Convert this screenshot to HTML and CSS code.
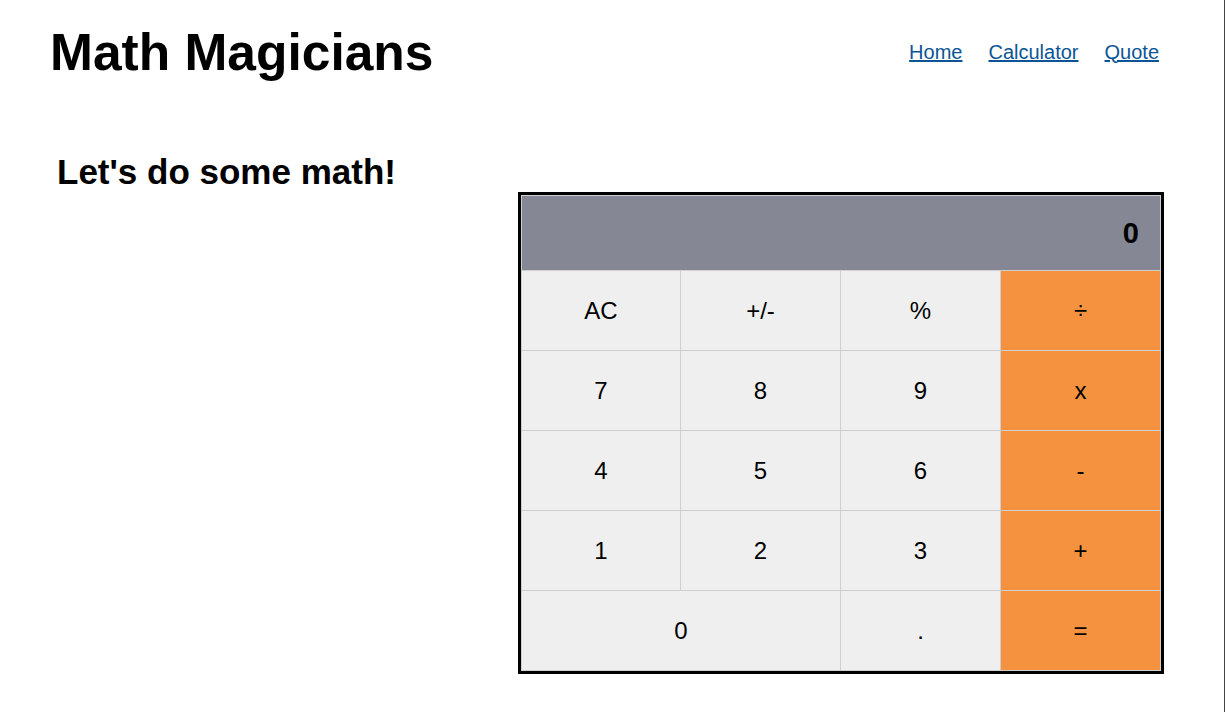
FILE: index.html
```html
<!DOCTYPE html>
<html lang="en">
<head>
<meta charset="utf-8">
<title>Math Magicians</title>
<link rel="stylesheet" href="styles.css">
</head>
<body>
<header class="site-header">
  <h1 class="logo">Math Magicians</h1>
  <nav class="nav">
    <a href="#" class="nav-link">Home</a>
    <a href="#" class="nav-link">Calculator</a>
    <a href="#" class="nav-link">Quote</a>
  </nav>
</header>
<main class="page">
  <h2 class="intro">Let's do some math!</h2>
  <div class="calc">
    <div class="display">0</div>
    <button class="key">AC</button>
    <button class="key">+/-</button>
    <button class="key">%</button>
    <button class="key op">÷</button>
    <button class="key">7</button>
    <button class="key">8</button>
    <button class="key">9</button>
    <button class="key op">x</button>
    <button class="key">4</button>
    <button class="key">5</button>
    <button class="key">6</button>
    <button class="key op">-</button>
    <button class="key">1</button>
    <button class="key">2</button>
    <button class="key">3</button>
    <button class="key op">+</button>
    <button class="key wide">0</button>
    <button class="key">.</button>
    <button class="key op">=</button>
  </div>
</main>
</body>
</html>
```
FILE: styles.css
```css
* { box-sizing: border-box; }

html {
  min-height: 100%;
  border-right: 1px solid #444;
  background: #fff;
}

body {
  margin: 0;
  font-family: "Liberation Sans", Arial, sans-serif;
  color: #000;
}

.site-header {
  display: flex;
  justify-content: space-between;
  align-items: center;
  padding: 23px 65px 0 50px;
}

.logo {
  margin: 0;
  font-size: 51.5px;
  line-height: 58px;
  font-weight: bold;
}

.nav {
  display: flex;
  gap: 26px;
  padding-bottom: 1px;
}

.nav-link {
  font-size: 20px;
  line-height: 24px;
  color: #0b5597;
  text-decoration: underline;
}

.page {
  display: flex;
  justify-content: space-between;
  align-items: flex-start;
  padding: 0 60px 0 57px;
}

.intro {
  margin: 71px 0 0;
  font-size: 35px;
  line-height: 40px;
  font-weight: bold;
}

.calc {
  margin-top: 111px;
  border: 3px solid #000;
  background: #cfcfcf;
  padding: 1px;
  display: grid;
  grid-template-columns: 158px repeat(3, 159px);
  grid-template-rows: 74px repeat(5, 79px);
  gap: 1px;
}

.display {
  grid-column: 1 / -1;
  background: #858795;
  display: flex;
  align-items: center;
  justify-content: flex-end;
  padding-right: 21px;
  font-size: 29px;
  font-weight: bold;
}

.key {
  border: 0;
  margin: 0;
  padding: 0;
  background: #efefef;
  font-family: "Liberation Sans", Arial, sans-serif;
  font-size: 24px;
  color: #000;
}

.key.op { background: #f4923f; }
.key.wide { grid-column: span 2; }
```
